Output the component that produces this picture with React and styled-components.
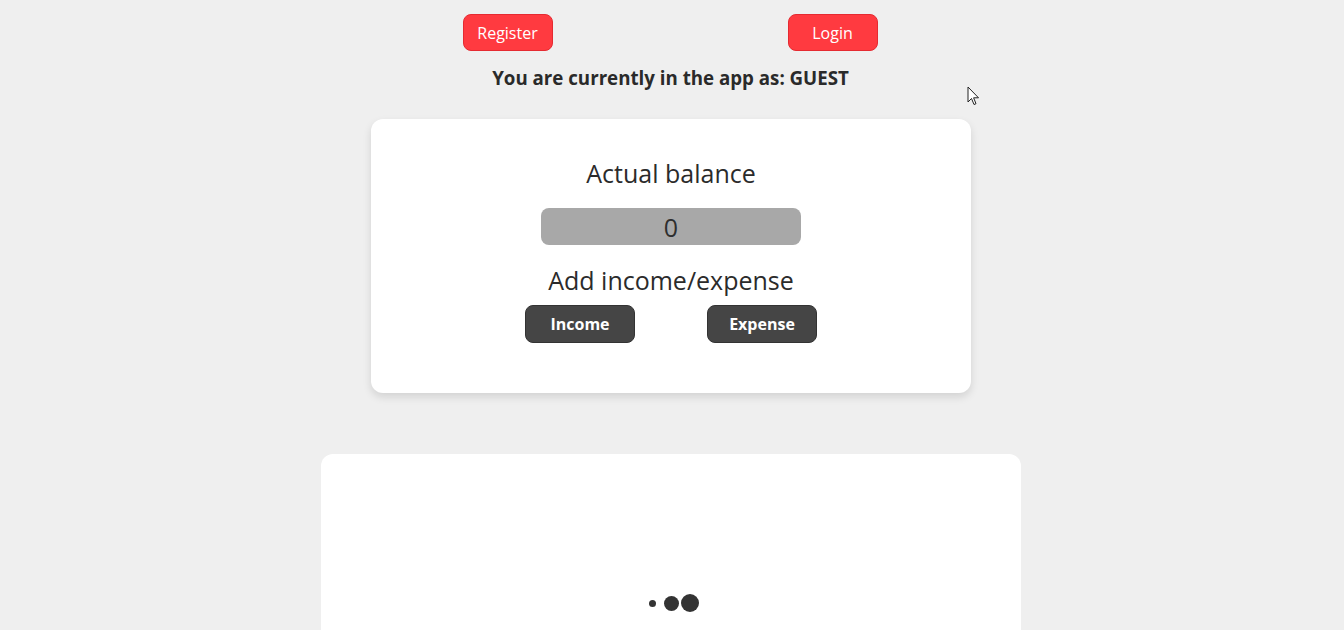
import React from "react";
import styled, { createGlobalStyle } from "styled-components";

const Global = createGlobalStyle`
  html, body { margin: 0; padding: 0; background: #efefef; }
  body { font-family: "Open Sans", "Liberation Sans", sans-serif; color: #2b2b2b; }
  * { box-sizing: border-box; }
`;

const Page = styled.div`
  position: relative;
  min-height: 630px;
  padding-top: 14px;
  display: flex;
  flex-direction: column;
  align-items: center;
  overflow: hidden;
`;

const ButtonRow = styled.div`
  width: 650px;
  display: flex;
  justify-content: space-around;
  margin-left: -4px;
`;

const RedButton = styled.button`
  width: 90px;
  height: 37px;
  border-radius: 8px;
  border: 1px solid #e52a31;
  background: #ff3a40;
  color: #fff;
  font-family: "Open Sans", sans-serif;
  font-size: 16px;
  padding: 0;
  cursor: pointer;
`;

const Status = styled.div`
  margin-top: 14px;
  font-size: 18.72px;
  font-weight: 700;
  line-height: 26px;
  color: #2a2a2a;
  margin-left: -3px;
`;

const Card = styled.div`
  width: ${(p) => p.$w}px;
  height: ${(p) => p.$h}px;
  background: #fff;
  border-radius: 12px;
  box-shadow: ${(p) => (p.$shadow ? "0 4px 8px rgba(0,0,0,0.12)" : "none")};
  display: flex;
  flex-direction: column;
  align-items: center;
  margin-top: ${(p) => p.$mt}px;
  margin-left: -2px;
`;

const Title = styled.div`
  font-size: 25px;
  line-height: 33px;
  color: #2b2b2b;
  margin-top: ${(p) => p.$mt}px;
`;

const BalanceBox = styled.div`
  width: 260px;
  height: 37px;
  border-radius: 8px;
  background: #a8a8a8;
  display: flex;
  align-items: center;
  justify-content: center;
  font-size: 25px;
  color: #2e2e2e;
  margin-top: 18px;
`;

const ActionRow = styled.div`
  display: flex;
  gap: 72px;
  margin-top: 8px;
`;

const DarkButton = styled.button`
  width: 110px;
  height: 38px;
  border-radius: 8px;
  border: 1px solid #333;
  background: #454545;
  color: #fff;
  font-family: "Open Sans", sans-serif;
  font-weight: 700;
  font-size: 16px;
  padding: 0;
  cursor: pointer;
`;

const Loader = styled.div`
  display: flex;
  align-items: center;
  margin-top: 139px;
`;

const Slot = styled.div`
  width: 18.5px;
  height: 20px;
  display: flex;
  align-items: center;
  justify-content: center;
`;

const Dot = styled.span`
  width: ${(p) => p.$size}px;
  height: ${(p) => p.$size}px;
  border-radius: 50%;
  background: #333;
`;

const Cursor = styled.svg`
  position: absolute;
  left: 967px;
  top: 86px;
`;

export default function App() {
  return (
    <>
      <Global />
      <Page>
        <ButtonRow>
          <RedButton>Register</RedButton>
          <RedButton>Login</RedButton>
        </ButtonRow>
        <Status>You are currently in the app as: GUEST</Status>
        <Card $w={600} $h={274} $mt={28} $shadow>
          <Title $mt={38}>Actual balance</Title>
          <BalanceBox>0</BalanceBox>
          <Title $mt={19}>Add income/expense</Title>
          <ActionRow>
            <DarkButton>Income</DarkButton>
            <DarkButton>Expense</DarkButton>
          </ActionRow>
        </Card>
        <Card $w={700} $h={300} $mt={61}>
          <Loader>
            <Slot><Dot $size={7} /></Slot>
            <Slot><Dot $size={15} /></Slot>
            <Slot><Dot $size={18} /></Slot>
          </Loader>
        </Card>
        <Cursor width="13" height="21" viewBox="0 0 13 21">
          <path d="M1 1 L1 16 L4.5 12.5 L7 18.5 L9 17.7 L6.6 11.8 L11.5 11.8 Z" fill="#fff" stroke="#222" strokeWidth="1" strokeLinejoin="round" />
        </Cursor>
      </Page>
    </>
  );
}
